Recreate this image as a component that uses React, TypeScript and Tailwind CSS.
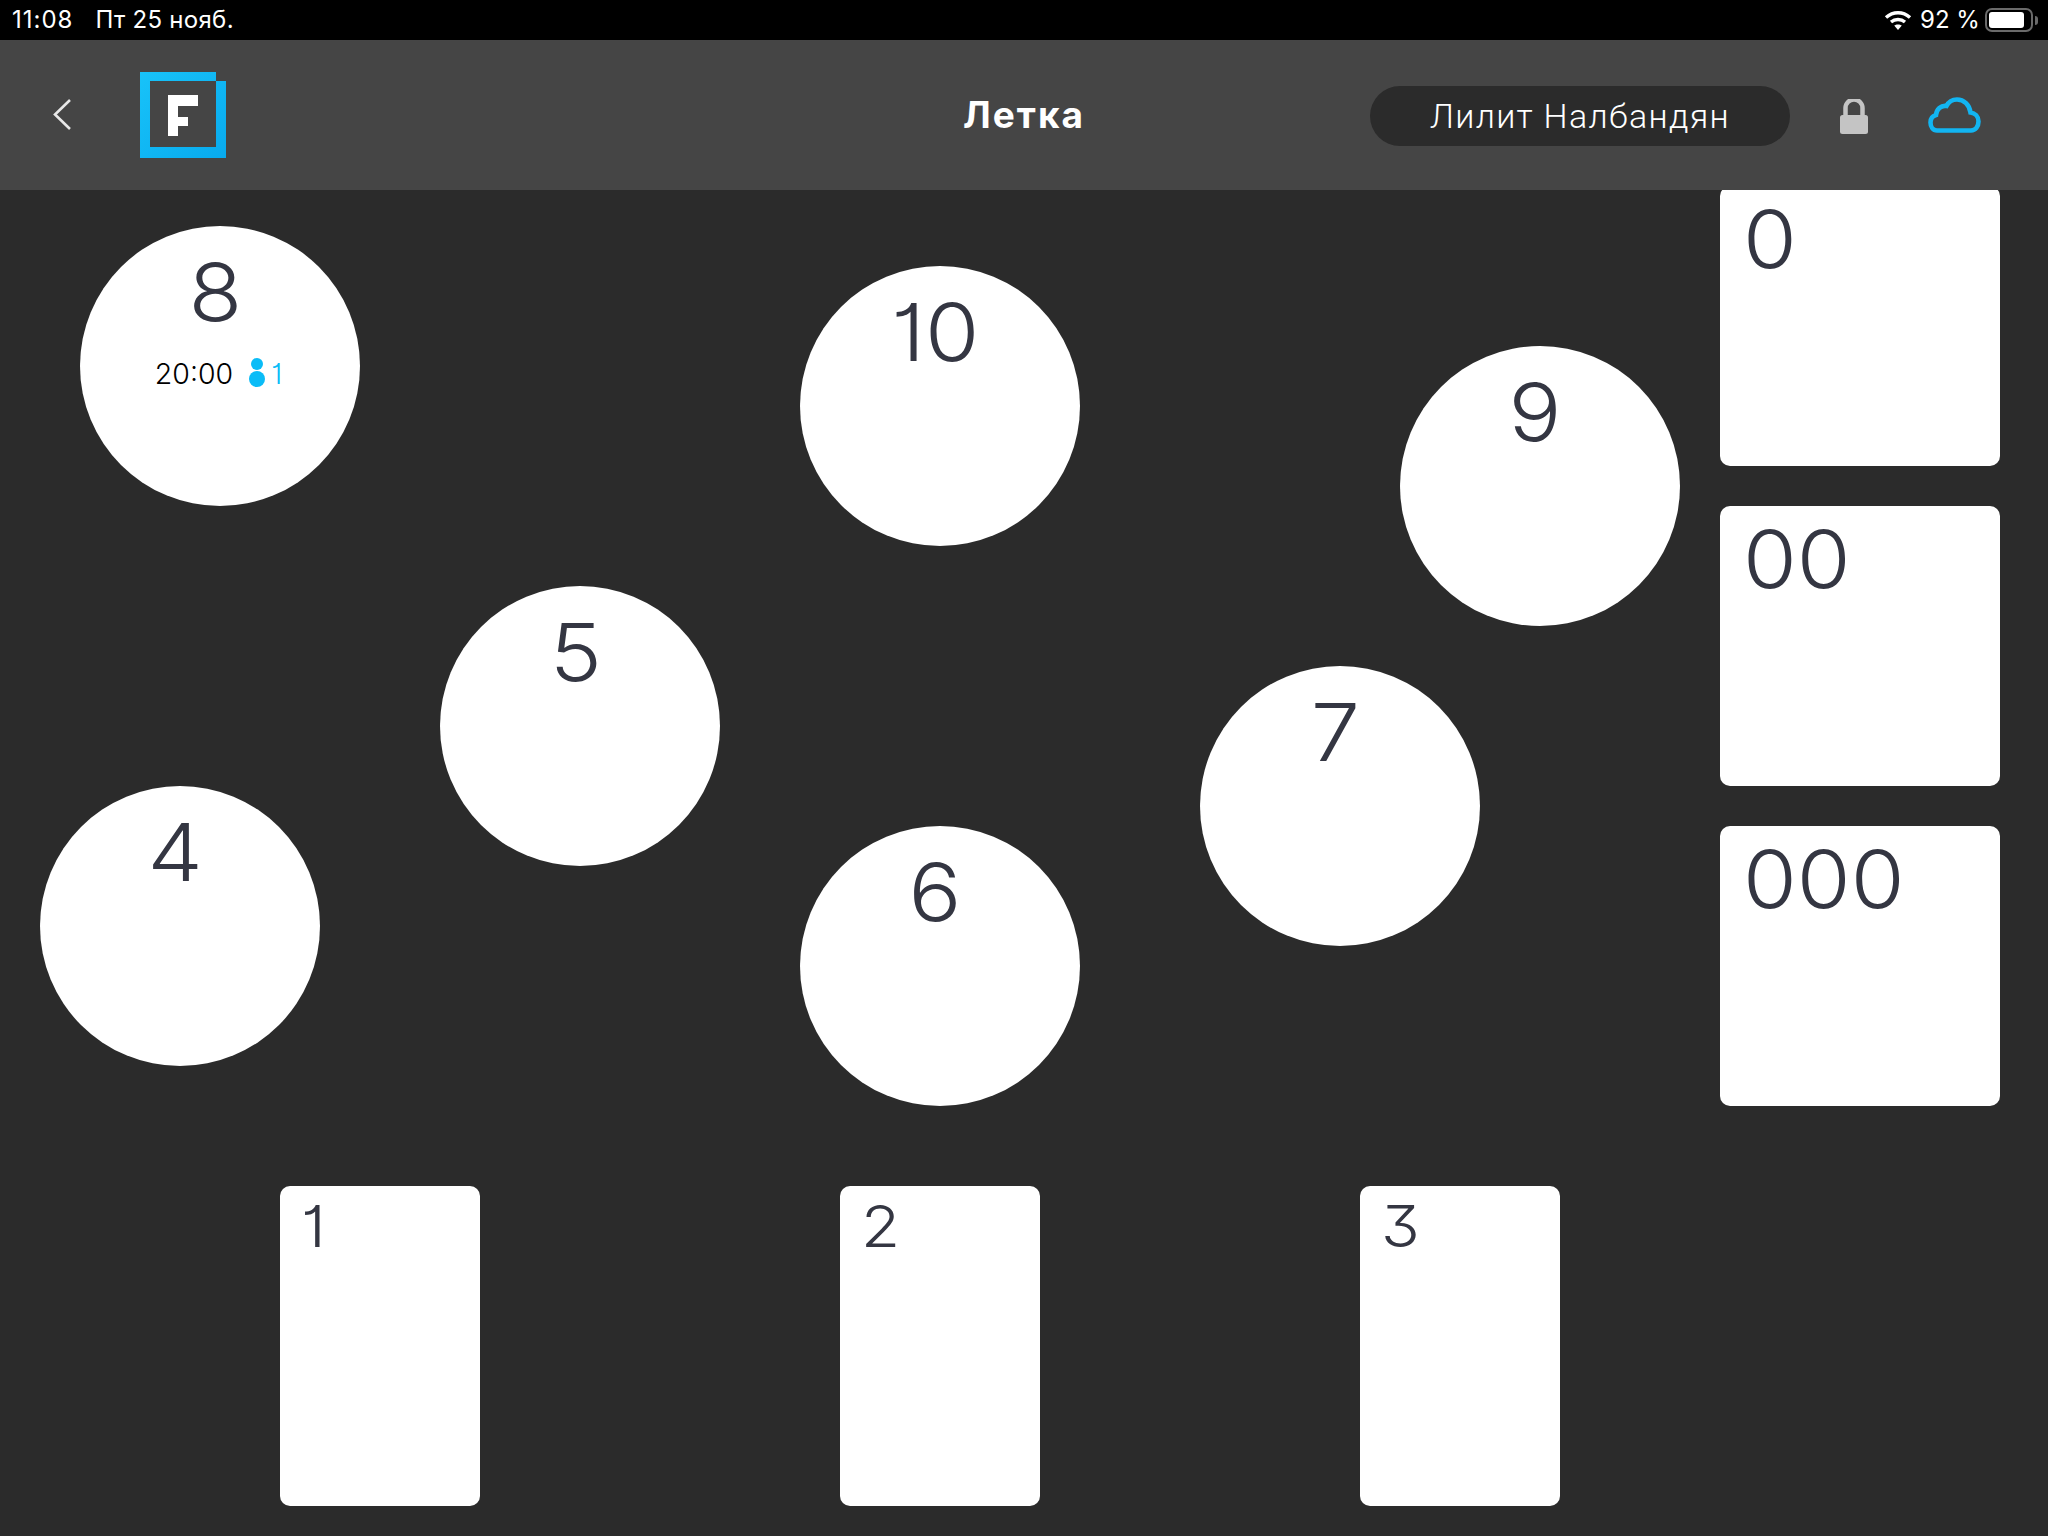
const Num = ({ children, className }: { children: React.ReactNode; className: string }) => (
  <div className={`font-['Inter',sans-serif] font-light text-[#343642] [font-feature-settings:'cv01','cv09'] ${className}`}>{children}</div>
);

function Round({ n, pos, children }: { n: string; pos: string; children?: React.ReactNode }) {
  return (
    <div className={`absolute ${pos} flex h-[280px] w-[280px] flex-col items-center rounded-full bg-white pt-[26px]`}>
      <Num className="mr-[9px] origin-center scale-x-[1.1] text-[80px] leading-[80px]">{n}</Num>
      {children}
    </div>
  );
}

function Square({ n, pos }: { n: string; pos: string }) {
  return (
    <div className={`absolute ${pos} h-[280px] w-[280px] rounded-[10px] bg-white pl-[23px] pt-[13px]`}>
      <Num className="origin-left scale-x-[1.09] text-[80px] leading-[80px]">{n}</Num>
    </div>
  );
}

function Card({ n, pos }: { n: string; pos: string }) {
  return (
    <div className={`absolute ${pos} h-[320px] w-[200px] rounded-[10px] bg-white pl-[21px] pt-[10px]`}>
      <Num className="origin-left scale-x-[1.1] text-[58px] leading-[60px]">{n}</Num>
    </div>
  );
}

export default function App() {
  return (
    <div className="relative h-[1536px] w-[2048px] overflow-hidden bg-[#2b2b2b]">
      <div className="relative z-20 flex h-[40px] items-center justify-between bg-black pl-[12px] pr-[10px] font-['Inter',sans-serif] text-[24px] text-white">
        <div className="flex gap-[22px]">
          <span className="tracking-[1px]">11:08</span>
          <span className="tracking-[0.3px]">Пт 25 нояб.</span>
        </div>
        <div className="flex items-center">
          <svg width="28" height="20" viewBox="0 0 28 20" fill="none" stroke="white" strokeWidth="3.4">
            <path d="M2 7.5C9 1.2 19 1.2 26 7.5" />
            <path d="M7 12C11 8.6 17 8.6 21 12" />
            <path d="M14 20L10.2 15.6C12.2 14 15.8 14 17.8 15.6Z" fill="white" stroke="none" />
          </svg>
          <span className="ml-[8px] w-[60px] whitespace-nowrap">92 %</span>
          <div className="ml-[5px] flex items-center">
            <div className="h-[24px] w-[48px] rounded-[7px] border-2 border-[#6a6a6a] p-[2px]">
              <div className="h-full w-[88%] rounded-[3px] bg-white" />
            </div>
            <div className="ml-[2px] h-[9px] w-[3px] rounded-r-full bg-[#6a6a6a]" />
          </div>
        </div>
      </div>

      <header className="relative z-10 flex h-[150px] items-center bg-[#454545] pl-[53px]">
        <svg width="18" height="31" viewBox="0 0 18 31" fill="none" stroke="#e8e8e8" strokeWidth="2.6" className="mt-[-1px]">
          <path d="M17 1L2 15.5L17 30" />
        </svg>
        <svg width="86" height="86" viewBox="0 0 86 86" className="ml-[69px]">
          <defs>
            <linearGradient id="logoFill" x1="0" y1="0" x2="1" y2="1">
              <stop offset="0" stopColor="#18c3f9" />
              <stop offset="1" stopColor="#08aaee" />
            </linearGradient>
          </defs>
          <path d="M0 0H76V9H86V86H0Z" fill="url(#logoFill)" />
          <rect x="10" y="9" width="66" height="66" fill="#454545" />
          <path d="M28 23H58V34H38V45H48V54H38V64H28Z" fill="white" />
        </svg>
        <div className="absolute left-[0px] top-[0px] flex h-[150px] w-[2048px] items-center justify-center font-['Inter',sans-serif] text-[37px] font-bold tracking-[2px] text-white">
          Летка
        </div>
        <div className="absolute left-[1370px] top-[46px] flex h-[60px] w-[420px] items-center justify-center rounded-full bg-[#2b2b2b] font-['Roboto',sans-serif] text-[34px] font-light tracking-[1.3px] text-white">
          Лилит Налбандян
        </div>
        <svg width="28" height="35" viewBox="0 0 28 35" className="absolute left-[1840px] top-[59px]">
          <path d="M5.5 18V9a8.5 8.5 0 0 1 17 0v9" fill="none" stroke="#c4c4c4" strokeWidth="4.5" />
          <rect x="0" y="16" width="28" height="19" rx="2.5" fill="#c4c4c4" />
        </svg>
        <svg width="53" height="36" viewBox="0 0 53 36" fill="none" stroke="#12b5f2" strokeWidth="4.6" className="absolute left-[1928px] top-[57px]">
          <path d="M9 33.5H43C47.5 33.5 50.5 29.5 50.5 24.5C50.5 19.5 47 16 42.5 15.5C41.5 8 36 2.5 29 2.5C24.5 2.5 20.5 5 18.5 9C13 8 8.5 12.5 8 18C4.5 19 2.5 22 2.5 25.5C2.5 30 5 33.5 9 33.5Z" />
        </svg>
      </header>

      <main className="absolute left-[0px] top-[0px] h-[1536px] w-[2048px]">
        <Round n="8" pos="left-[80px] top-[226px]">
          <div className="mr-[3px] mt-[24px] flex items-center font-['Inter',sans-serif] font-light [font-feature-settings:'cv01']">
            <span className="text-[28.5px] leading-[36px] text-black">20:00</span>
            <svg width="18" height="30" viewBox="0 0 18 30" fill="#0abcf7" className="ml-[15px] mt-[-3px]">
              <circle cx="9" cy="6" r="6" />
              <circle cx="9" cy="21" r="8" />
            </svg>
            <span className="ml-[5px] text-[28.5px] leading-[36px] text-[#0abcf7]">1</span>
          </div>
        </Round>
        <Round n="10" pos="left-[800px] top-[266px]" />
        <Round n="9" pos="left-[1400px] top-[346px]" />
        <Round n="5" pos="left-[440px] top-[586px]" />
        <Round n="7" pos="left-[1200px] top-[666px]" />
        <Round n="4" pos="left-[40px] top-[786px]" />
        <Round n="6" pos="left-[800px] top-[826px]" />
        <Square n="0" pos="left-[1720px] top-[186px]" />
        <Square n="00" pos="left-[1720px] top-[506px]" />
        <Square n="000" pos="left-[1720px] top-[826px]" />
        <Card n="1" pos="left-[280px] top-[1186px]" />
        <Card n="2" pos="left-[840px] top-[1186px]" />
        <Card n="3" pos="left-[1360px] top-[1186px]" />
      </main>
    </div>
  );
}
